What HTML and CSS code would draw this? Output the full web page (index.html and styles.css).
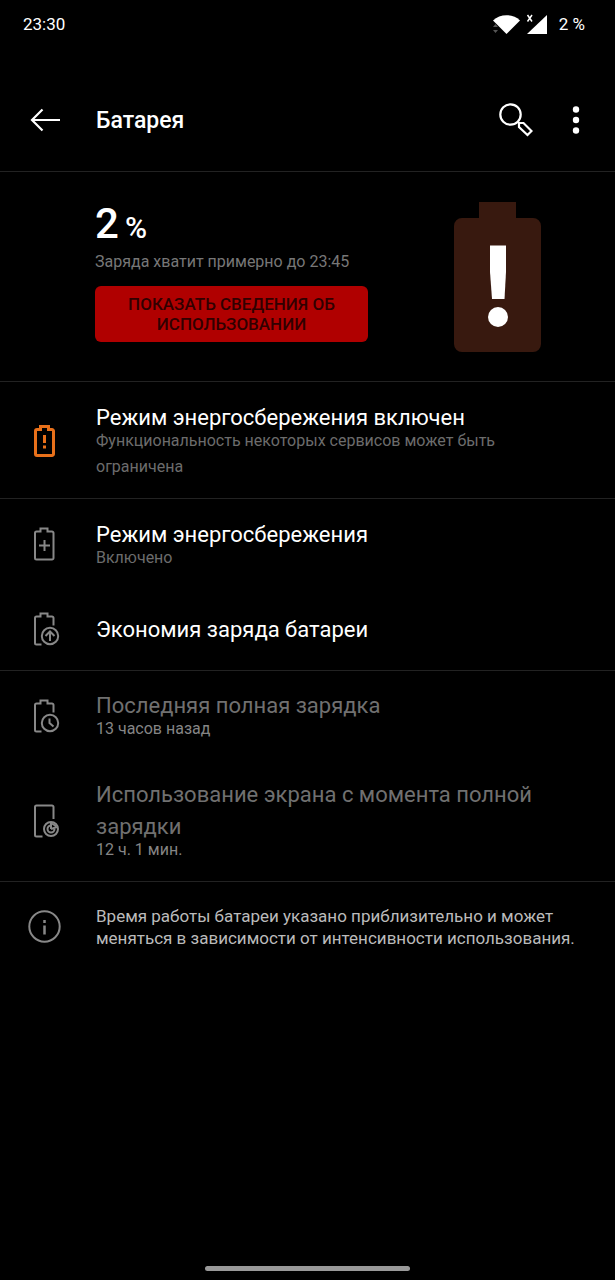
FILE: index.html
```html
<!DOCTYPE html>
<html lang="ru">
<head>
    <meta charset="UTF-8">
    <meta name="viewport" content="width=device-width, initial-scale=1.0">
    <title>Батарея</title>
    <link rel="stylesheet" href="styles.css">
</head>
<body>
    <div class="status-bar">
        <span class="status-time">23:30</span>
        <div class="status-icons">
            <svg width="54" height="24" viewBox="0 0 54 24" aria-hidden="true">
                <path d="M0 15l2.500-3 2.500 3zM0 18l2.500 3 2.500-3z" fill="#555"/>
                <path d="M0 8.500C7 1.500 20 1.500 27 8.500L13.500 22z" fill="#fff"/>
                <path d="M54 3v19H34z" fill="#fff"/>
                <path d="M34.500 3l4.500 6.500M39 3l-4.500 6.500" stroke="#fff" stroke-width="1.500"/>
            </svg>
            <span>2 %</span>
        </div>
    </div>

    <header class="header">
        <button type="button" class="icon-button" aria-label="Назад">
            <svg width="32" height="26" viewBox="0 0 32 26" fill="none" stroke="#fff" stroke-width="2.200">
                <path d="M13.500 2.500L3 13l10.500 10.500M3 13h28"/>
            </svg>
        </button>
        <h1>Батарея</h1>
        <div class="header-actions">
            <button type="button" class="icon-button" aria-label="Поиск">
                <svg width="34" height="34" viewBox="0 0 34 34" fill="none" stroke="#fff" stroke-width="2.200">
                    <circle cx="11.500" cy="11.500" r="10.200"/>
                    <path d="M18.500 18.500l1.500 1.500M20 20h4.500l8 8-4 4-8.500-8z"/>
                </svg>
            </button>
            <button type="button" class="icon-button" aria-label="Ещё">
                <svg width="8" height="30" viewBox="0 0 8 30" fill="#fff">
                    <circle cx="4" cy="4.500" r="3.200"/>
                    <circle cx="4" cy="15" r="3.200"/>
                    <circle cx="4" cy="25.500" r="3.200"/>
                </svg>
            </button>
        </div>
    </header>

    <main>
        <section class="summary">
            <div class="summary-info">
                <div class="level">2 <span class="percent">%</span></div>
                <div class="estimate">Заряда хватит примерно до 23:45</div>
                <button type="button" class="usage-button">Показать сведения об использовании</button>
            </div>
            <svg class="battery" width="88" height="150" viewBox="0 0 88 150" aria-hidden="true">
                <path d="M25 0h37v16h17a8 8 0 0 1 8 8v118a8 8 0 0 1-8 8H8a8 8 0 0 1-8-8V24a8 8 0 0 1 8-8h17z" fill="#38190f"/>
                <path d="M36 43.500H52V70L50.500 97H38L36 70z" fill="#fff"/>
                <circle cx="44" cy="115" r="10" fill="#fff"/>
            </svg>
        </section>

        <section class="group">
            <div class="row">
                <svg class="row-icon saver" width="40" height="36" viewBox="0 0 40 36">
                    <path d="M13 6.500h3.500v-3h8v3H28a1.500 1.500 0 0 1 1.500 1.500v23a1.500 1.500 0 0 1-1.500 1.500H13a1.500 1.500 0 0 1-1.500-1.500V8A1.500 1.500 0 0 1 13 6.500zM20.500 12v8M20.500 22.500v3"/>
                </svg>
                <div class="row-text">
                    <div class="title">Режим энергосбережения включен</div>
                    <div class="subtitle">Функциональность некоторых сервисов может быть ограничена</div>
                </div>
            </div>
        </section>

        <section class="group">
            <div class="row">
                <svg class="row-icon" width="40" height="36" viewBox="0 0 40 36">
                    <path d="M13 4.500h3.500v-3h7v3H28A1.500 1.500 0 0 1 29.500 6v25a1.500 1.500 0 0 1-1.500 1.500H12.500A1.500 1.500 0 0 1 11 31V6a1.500 1.500 0 0 1 1.500-1.500zM20.500 13v11M15 18.500h11"/>
                </svg>
                <div class="row-text">
                    <div class="title">Режим энергосбережения</div>
                    <div class="subtitle">Включено</div>
                </div>
            </div>
            <div class="row single">
                <svg class="row-icon" width="40" height="36" viewBox="0 0 40 36">
                    <path d="M17.500 32.500h-5A1.500 1.500 0 0 1 11 31V6a1.500 1.500 0 0 1 1.500-1.500h4v-3h7v3H28A1.500 1.500 0 0 1 29.500 6v7.500"/>
                    <circle cx="26" cy="24" r="8.200"/>
                    <path d="M26 29v-9.500M21.500 24l4.500-4.500 4.500 4.500"/>
                </svg>
                <div class="row-text">
                    <div class="title">Экономия заряда батареи</div>
                </div>
            </div>
        </section>

        <section class="group disabled">
            <div class="row">
                <svg class="row-icon" width="40" height="36" viewBox="0 0 40 36">
                    <path d="M17.500 33.500h-5A1.500 1.500 0 0 1 11 32V7a1.500 1.500 0 0 1 1.500-1.500h4v-3h7v3H28A1.500 1.500 0 0 1 29.500 7v7.500"/>
                    <circle cx="26" cy="25" r="8.200"/>
                    <path d="M25.500 20.500V25l4 3.500"/>
                </svg>
                <div class="row-text">
                    <div class="title">Последняя полная зарядка</div>
                    <div class="subtitle">13 часов назад</div>
                </div>
            </div>
            <div class="row">
                <svg class="row-icon" width="40" height="36" viewBox="0 0 40 36">
                    <path d="M18.500 33.500h-6A1.500 1.500 0 0 1 11 32V4a1.500 1.500 0 0 1 1.500-1.500H28A1.500 1.500 0 0 1 29.500 4v12"/>
                    <circle cx="27" cy="26" r="7"/>
                    <path d="M27 22.500a3.500 3.500 0 1 0 3.500 3.500M27 26V19M27 26l6-2M28 20.500l4.500 3"/>
                </svg>
                <div class="row-text">
                    <div class="title">Использование экрана с момента полной зарядки</div>
                    <div class="subtitle">12 ч. 1 мин.</div>
                </div>
            </div>
        </section>

        <section class="note">
            <svg class="row-icon" width="40" height="36" viewBox="0 0 40 36">
                <circle cx="20.500" cy="17.500" r="15.200"/>
                <path d="M20.500 16.500v9M20.500 11v3" stroke-width="2.500"/>
            </svg>
            <p>Время работы батареи указано приблизительно и может меняться в зависимости от интенсивности использования.</p>
        </section>
    </main>

    <div class="home-indicator"></div>
</body>
</html>
```
FILE: styles.css
```css
* {
    box-sizing: border-box;
}
body {
    display: flex;
    flex-direction: column;
    min-height: 100vh;
    margin: 0;
    background-color: #000;
    color: #fff;
    font-family: Roboto, sans-serif;
}
.status-bar {
    display: flex;
    justify-content: space-between;
    align-items: center;
    height: 48px;
    padding: 0 30px 0 23px;
    font-size: 17px;
}
.status-icons {
    display: flex;
    align-items: center;
    gap: 12px;
}
.header {
    display: flex;
    align-items: center;
    padding: 44px 35px 23px 29px;
    border-bottom: 1px solid #222;
}
.header h1 {
    margin: 0 0 0 35px;
    font-size: 23px;
    font-weight: 500;
}
.header-actions {
    display: flex;
    align-items: center;
    gap: 39px;
    margin-left: auto;
}
.icon-button {
    display: flex;
    align-items: center;
    height: 56px;
    padding: 0;
    border: none;
    background: none;
    cursor: pointer;
}
.summary {
    display: flex;
    justify-content: space-between;
    align-items: flex-start;
    padding: 30px 73px 29px 95px;
    border-bottom: 1px solid #222;
}
.summary-info {
    width: 273px;
}
.level {
    display: flex;
    align-items: baseline;
    gap: 6px;
    font-size: 42px;
    font-weight: 500;
    line-height: 44px;
}
.percent {
    font-size: 30px;
    line-height: 30px;
}
.estimate {
    margin-bottom: 8px;
    color: #777;
    font-size: 16px;
    line-height: 32px;
}
.usage-button {
    width: 100%;
    padding: 8px 24px;
    border: none;
    border-radius: 6px;
    background-color: #b00000;
    color: #300000;
    font-family: inherit;
    font-size: 17px;
    font-weight: 500;
    line-height: 20px;
    text-transform: uppercase;
    cursor: pointer;
}
.group {
    border-bottom: 1px solid #222;
}
.row,
.note {
    display: flex;
    align-items: center;
    gap: 32px;
    padding: 20px 32px 18px 24px;
}
.single {
    padding-top: 23px;
    padding-bottom: 22px;
}
.row-icon {
    flex-shrink: 0;
    fill: none;
    stroke: #888;
    stroke-width: 2;
}
.saver {
    stroke: #e8701a;
    stroke-width: 3;
}
.title {
    font-size: 22px;
    line-height: 32px;
}
.subtitle {
    margin-top: -6px;
    color: #6c6c6c;
    font-size: 16px;
    line-height: 26px;
}
.disabled .row {
    padding-top: 19px;
}
.disabled .title {
    color: #707070;
}
.disabled .subtitle {
    color: #858585;
}
.note {
    padding: 23px 24px;
}
.note p {
    margin: 0;
    color: #bbb;
    font-size: 17px;
    line-height: 22px;
}
.home-indicator {
    width: 205px;
    height: 5px;
    margin: auto auto 9px;
    border-radius: 3px;
    background-color: #999;
}
```
